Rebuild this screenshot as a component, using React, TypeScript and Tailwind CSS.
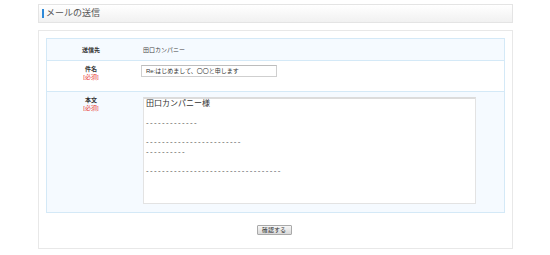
import React from "react";

const jp = { fontFamily: '"Liberation Sans", "Noto Sans CJK JP", sans-serif' };

const Required = () => <div className="text-[6px] leading-[8px] text-[#e8322f]">[必須]</div>;

const Dashes = ({ n }: { n: number }) => (
  <div className="h-[9.5px] leading-[9.5px] text-[8px] tracking-[1.33px] text-[#555]">{"-".repeat(n)}</div>
);

const Blank = () => <div className="h-[9.5px]" />;

export default function App() {
  return (
    <div className="w-[550px] h-[255px] bg-white" style={jp}>
      <div className="ml-[38px] w-[475px] pt-[4px]">
        {/* page title */}
        <div className="h-[19px] flex items-center border border-[#e4e4e4] bg-gradient-to-b from-white to-[#f1f1f1]">
          <span className="ml-[3px] w-[2px] h-[9px] bg-[#2f8ad8]" />
          <span className="ml-[2px] text-[9px] leading-none text-[#555]">メールの送信</span>
        </div>

        <div className="mt-[7px] border border-[#e8e8e8] bg-white px-[7px] pt-[7px] pb-[13px]">
          <div className="border border-[#d4e9f7]">
            {/* 送信先 */}
            <div className="flex h-[21px] items-center bg-[#f5faff]">
              <div className="w-[88px] pt-[1px] text-center text-[6px] font-bold text-[#333]">送信先</div>
              <div className="pl-[8px] pt-[1px] text-[6px] text-[#444]">田口カンパニー</div>
            </div>
            {/* 件名 */}
            <div className="flex h-[31px] border-t border-[#d4e9f7] bg-white">
              <div className="w-[88px] pt-[4px] text-center">
                <div className="text-[6px] leading-[8px] font-bold text-[#333]">件名</div>
                <Required />
              </div>
              <div className="pl-[6px] pt-[4px]">
                <div className="w-[136px] h-[12px] border border-[#cfcfcf] border-t-[#bdbdbd] bg-white pl-[4px] flex items-center text-[6px] text-[#333]">
                  Re:はじめまして、〇〇と申します
                </div>
              </div>
            </div>
            {/* 本文 */}
            <div className="flex h-[121px] border-t border-[#d4e9f7] bg-[#f5faff]">
              <div className="w-[88px] pt-[4px] text-center">
                <div className="text-[6px] leading-[8px] font-bold text-[#333]">本文</div>
                <Required />
              </div>
              <div className="pl-[8px] pt-[5px]">
                <div className="w-[333px] h-[107px] border border-[#e3e3e3] border-t-2 border-t-[#dcdcdc] bg-white pl-[2px]">
                  <div className="h-[9.5px] leading-[9.5px] text-[8px] text-[#333]">田口カンパニー様</div>
                  <Blank />
                  <Dashes n={13} />
                  <Blank />
                  <Dashes n={24} />
                  <Dashes n={10} />
                  <Blank />
                  <Dashes n={34} />
                </div>
              </div>
            </div>
          </div>

          <div className="mt-[12px] flex justify-center">
            <button className="-ml-[3px] w-[35px] h-[10px] border border-[#a9a9a9] rounded-[1px] bg-gradient-to-b from-[#f7f7f7] to-[#d9d9d9] text-[6px] leading-none text-[#333] flex items-center justify-center">
              確認する
            </button>
          </div>
        </div>
      </div>
    </div>
  );
}
